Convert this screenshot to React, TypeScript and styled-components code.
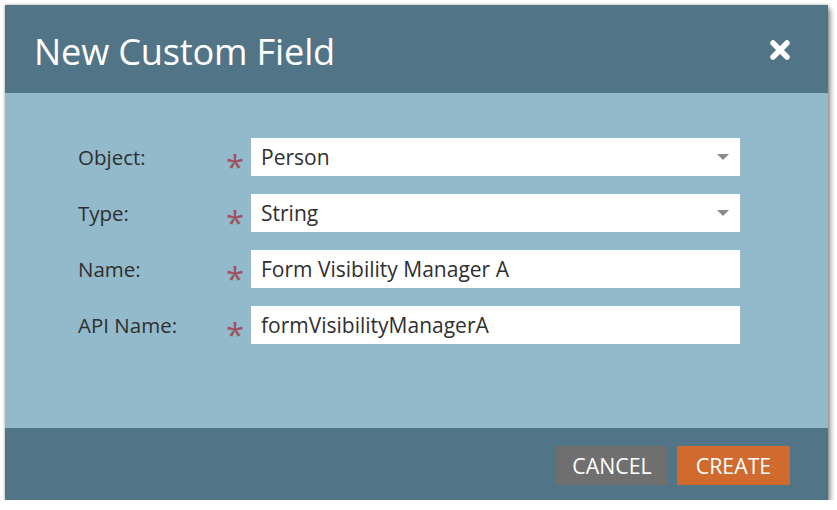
import styled, { createGlobalStyle } from 'styled-components';

const GlobalStyle = createGlobalStyle`
  body {
    margin: 0;
    background: #ffffff;
    font-family: "Open Sans", "Liberation Sans", sans-serif;
  }
`;

const Dialog = styled.div`
  margin: 5px 0 0 5px;
  width: 823px;
  box-shadow: 0 0 3px rgba(0, 0, 0, 0.35), 3px 4px 5px rgba(0, 0, 0, 0.35);
`;

const Header = styled.div`
  height: 88px;
  background: #527487;
  display: flex;
  align-items: center;
  justify-content: space-between;
  padding: 0 37px 0 29px;
  box-sizing: border-box;
`;

const Title = styled.h1`
  margin: 4px 0 0;
  color: #ffffff;
  font-size: 36.2px;
  font-weight: 400;
  letter-spacing: -0.2px;
`;

const CloseButton = styled.button`
  background: none;
  border: none;
  padding: 0;
  width: 22px;
  height: 22px;
  margin-top: 2px;
  cursor: pointer;
  display: flex;
`;

const Body = styled.div`
  height: 335px;
  background: #92bacb;
  padding: 45px 0 0 73px;
  box-sizing: border-box;
  display: flex;
  flex-direction: column;
  gap: 18px;
`;

const Row = styled.div`
  display: grid;
  grid-template-columns: 146px 27px 489px;
  align-items: center;
  height: 38px;
`;

const Label = styled.label`
  font-size: 20.5px;
  color: #2f2f2f;
`;

const Required = styled.span`
  color: #a0525c;
  font-size: 33px;
  line-height: 1;
  padding: 12px 0 0 2px;
  height: 38px;
  box-sizing: border-box;
`;

const Field = styled.div`
  position: relative;
  height: 38px;
  background: #ffffff;
  padding: 0 10px;
  display: flex;
  align-items: center;
  font-size: 21px;
  color: #2f2f2f;
`;

const Caret = styled.span`
  position: absolute;
  right: 11px;
  top: 16px;
  width: 0;
  height: 0;
  border-left: 6px solid transparent;
  border-right: 6px solid transparent;
  border-top: 6px solid #8a8a8a;
`;

const Footer = styled.div`
  height: 72px;
  background: #527487;
  display: flex;
  justify-content: flex-end;
  align-items: flex-start;
  gap: 9px;
  padding: 18px 38px 0 0;
  box-sizing: border-box;
`;

const Button = styled.button<{ $primary?: boolean }>`
  height: 39px;
  width: ${(p) => (p.$primary ? '113px' : '112px')};
  border: none;
  background: ${(p) => (p.$primary ? '#d06a2e' : '#6f6f6f')};
  color: #ffffff;
  font-family: "Open Sans", "Liberation Sans", sans-serif;
  font-size: 21.3px;
  padding: 0;
  cursor: pointer;
`;

const fields = [
  { label: 'Object:', value: 'Person', select: true },
  { label: 'Type:', value: 'String', select: true },
  { label: 'Name:', value: 'Form Visibility Manager A', select: false },
  { label: 'API Name:', value: 'formVisibilityManagerA', select: false },
];

export default function App() {
  return (
    <>
      <GlobalStyle />
      <Dialog>
        <Header>
          <Title>New Custom Field</Title>
          <CloseButton aria-label="Close">
            <svg width="22" height="22" viewBox="0 0 22 22">
              <path d="M4 4 L18 18 M18 4 L4 18" stroke="#ffffff" strokeWidth="5.5" strokeLinecap="round" />
            </svg>
          </CloseButton>
        </Header>
        <Body>
          {fields.map((f) => (
            <Row key={f.label}>
              <Label>{f.label}</Label>
              <Required>*</Required>
              <Field>
                {f.value}
                {f.select && <Caret />}
              </Field>
            </Row>
          ))}
        </Body>
        <Footer>
          <Button>CANCEL</Button>
          <Button $primary>CREATE</Button>
        </Footer>
      </Dialog>
    </>
  );
}
